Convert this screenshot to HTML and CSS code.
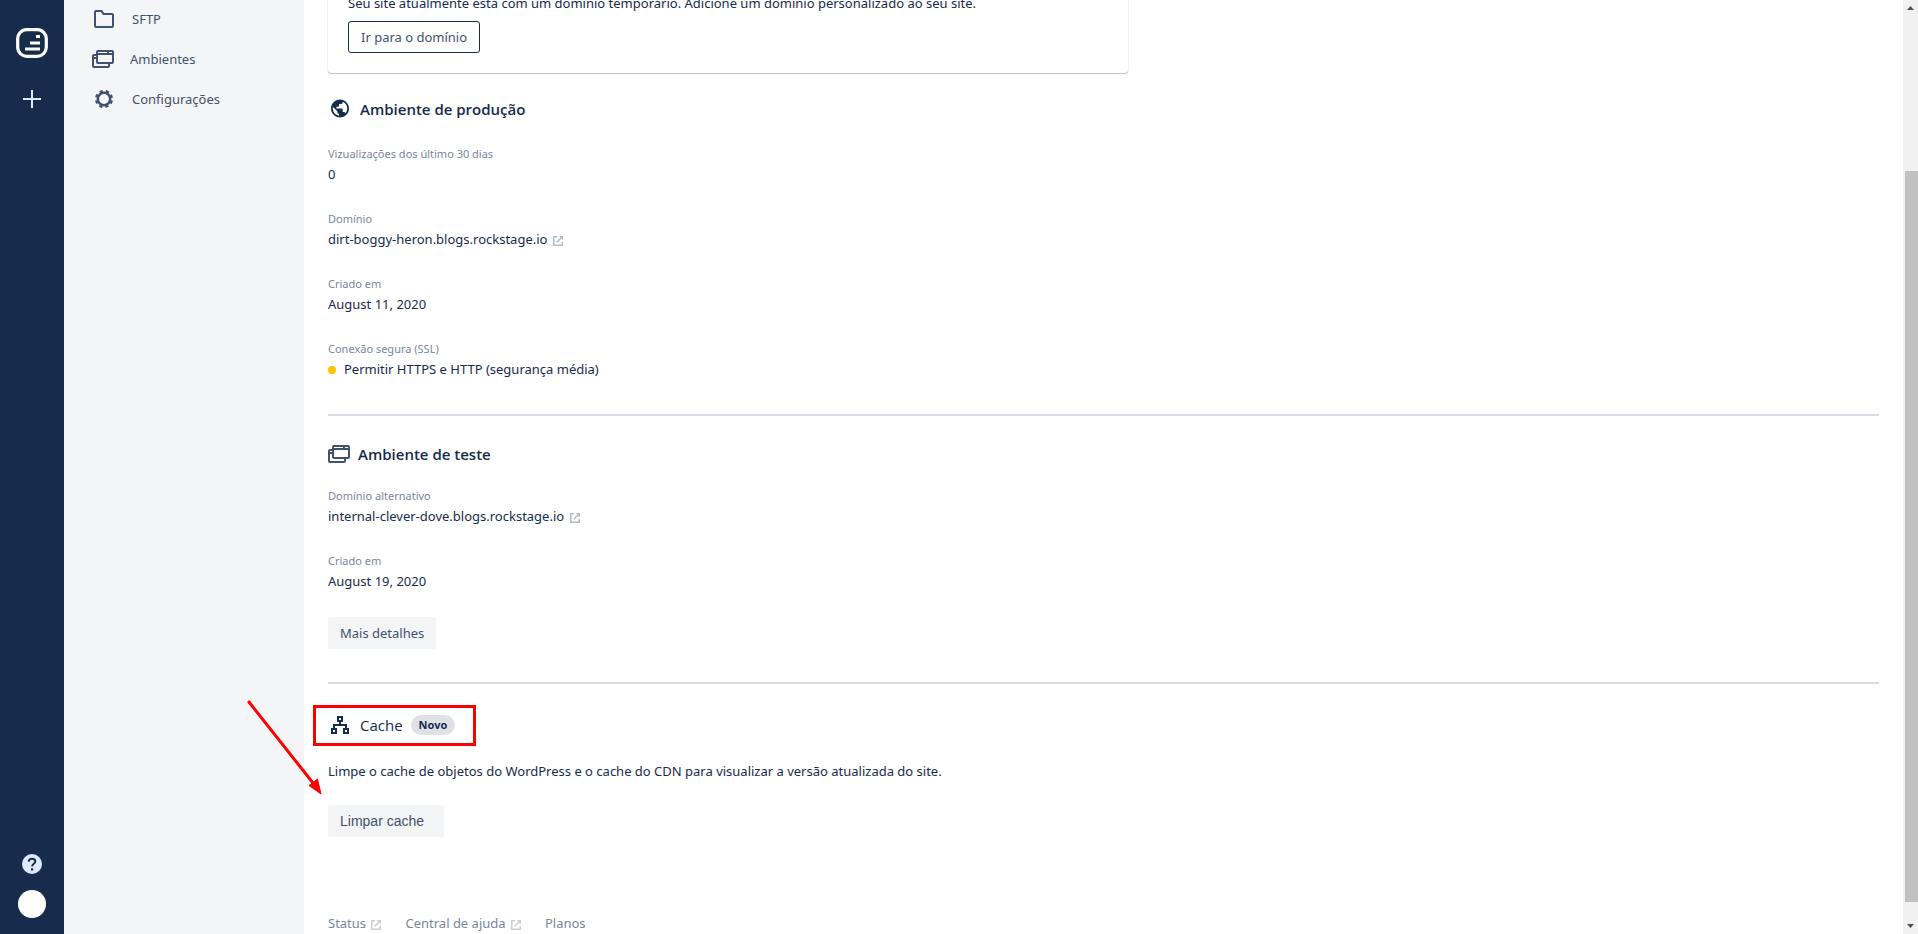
FILE: index.html
```html
<!DOCTYPE html>
<html lang="pt-BR">
<head>
    <meta charset="UTF-8">
    <meta name="viewport" content="width=device-width, initial-scale=1.0">
    <title>Ambientes</title>
    <link rel="stylesheet" href="styles.css">
</head>
<body>
    <svg width="0" height="0" class="symbols" aria-hidden="true">
        <symbol id="icon-windows" viewBox="0 0 22 18">
            <g fill="none" stroke="currentColor" stroke-width="2" stroke-linejoin="round">
                <rect x="5" y="1" width="16" height="12" rx="1"/>
                <path d="M5 4h16M5 5H2a1 1 0 0 0-1 1v10a1 1 0 0 0 1 1h14a1 1 0 0 0 1-1v-3M1 8h4"/>
            </g>
            <path fill="currentColor" d="M15 1h2v3h-2z"/>
        </symbol>
        <symbol id="icon-external" viewBox="0 0 10 10">
            <path fill="none" stroke="currentColor" stroke-width="1.5" d="M4 .8H.8v8.400h8.400V6M3.800 6.200 8.500 1.500"/>
            <path fill="currentColor" d="M5.800 0H10v4.200z"/>
        </symbol>
    </svg>

    <nav class="rail">
        <a href="#" class="logo" aria-label="Início">
            <svg width="32" height="30" viewBox="0 0 32 30">
                <rect x="1.700" y="1.700" width="28.600" height="26.600" rx="9" fill="none" stroke="#fff" stroke-width="3.200"/>
                <path fill="#fff" d="M20 7h4v3h-4zM14 13.500h10v3H14zM9 19.500h15v3H9z"/>
            </svg>
        </a>
        <button class="rail-button" aria-label="Adicionar">
            <svg width="18" height="18" viewBox="0 0 18 18"><path d="M9 0v18M0 9h18" stroke="#deebff" stroke-width="2"/></svg>
        </button>
        <button class="rail-button help" aria-label="Ajuda">
            <svg width="20" height="20" viewBox="0 0 20 20">
                <circle cx="10" cy="10" r="10" fill="#deebff"/>
                <path d="M6.700 7.700C6.700 5.700 8.100 4.700 10 4.700s3.300 1 3.300 2.800c0 2.300-3.200 2.300-3.200 5" fill="none" stroke="#172b4d" stroke-width="1.900"/>
                <path d="M9 14.300h2.200v2.200H9z" fill="#172b4d"/>
            </svg>
        </button>
        <button class="avatar" aria-label="Perfil"></button>
    </nav>

    <aside class="sidebar">
        <a href="#" class="menu-item">
            <svg width="24" height="24" viewBox="0 0 24 24"><path d="M3 19V5a1 1 0 0 1 1-1h5.500l2 3H20a1 1 0 0 1 1 1v11a1 1 0 0 1-1 1H4a1 1 0 0 1-1-1z" fill="none" stroke="currentColor" stroke-width="2"/></svg>
            SFTP
        </a>
        <a href="#" class="menu-item">
            <svg width="22" height="18"><use href="#icon-windows"/></svg>
            Ambientes
        </a>
        <a href="#" class="menu-item">
            <svg width="24" height="24" viewBox="0 0 24 24">
                <circle cx="12" cy="12" r="6.200" fill="none" stroke="currentColor" stroke-width="2.600"/>
                <circle cx="12" cy="12" r="7.900" fill="none" stroke="currentColor" stroke-width="2.400" stroke-dasharray="3.200 3.004" transform="rotate(11 12 12)"/>
            </svg>
            Configurações
        </a>
    </aside>

    <main class="content">
        <section class="notice">
            <p>Seu site atualmente está com um domínio temporário. Adicione um domínio personalizado ao seu site.</p>
            <button class="button outline">Ir para o domínio</button>
        </section>

        <section class="production">
            <h2>
                <svg width="24" height="24" viewBox="0 0 24 24"><path transform="translate(1.200 .7) scale(.9)" fill="currentColor" d="M12 2C6.480 2 2 6.480 2 12s4.480 10 10 10 10-4.480 10-10S17.520 2 12 2zm-1 17.930c-3.950-.49-7-3.850-7-7.930 0-.62.080-1.210.21-1.790L9 15v1c0 1.100.9 2 2 2v1.930zm6.900-2.540c-.26-.81-1-1.390-1.900-1.390h-1v-3c0-.55-.45-1-1-1H8v-2h2c.55 0 1-.45 1-1V7h2c1.100 0 2-.9 2-2v-.41c2.930 1.190 5 4.060 5 7.410 0 2.080-.8 3.970-2.100 5.390z"/></svg>
                Ambiente de produção
            </h2>
            <dl>
                <div>
                    <dt>Vizualizações dos último 30 dias</dt>
                    <dd>0</dd>
                </div>
                <div>
                    <dt>Domínio</dt>
                    <dd><a href="#">dirt-boggy-heron.blogs.rockstage.io <svg class="external" width="10" height="10"><use href="#icon-external"/></svg></a></dd>
                </div>
                <div>
                    <dt>Criado em</dt>
                    <dd>August 11, 2020</dd>
                </div>
                <div>
                    <dt>Conexão segura (SSL)</dt>
                    <dd><span class="dot"></span>Permitir HTTPS e HTTP (segurança média)</dd>
                </div>
            </dl>
        </section>
        <hr>

        <section class="staging">
            <h2>
                <svg class="soft" width="22" height="18"><use href="#icon-windows"/></svg>
                Ambiente de teste
            </h2>
            <dl>
                <div>
                    <dt>Domínio alternativo</dt>
                    <dd><a href="#">internal-clever-dove.blogs.rockstage.io <svg class="external" width="10" height="10"><use href="#icon-external"/></svg></a></dd>
                </div>
                <div>
                    <dt>Criado em</dt>
                    <dd>August 19, 2020</dd>
                </div>
            </dl>
            <button class="button">Mais detalhes</button>
        </section>
        <hr>

        <section class="cache">
            <h2>
                <svg width="24" height="24" viewBox="0 0 24 24">
                    <g fill="none" stroke="currentColor" stroke-width="2">
                        <path d="M10 4h4v4h-4zM4 16h4v4H4zM16 16h4v4h-4zM12 8v4M6 16v-4h12v4"/>
                    </g>
                </svg>
                Cache
                <span class="badge">Novo</span>
                <span class="highlight"></span>
            </h2>
            <p>Limpe o cache de objetos do WordPress e o cache do CDN para visualizar a versão atualizada do site.</p>
            <button class="button clear">Limpar cache</button>
            <svg class="arrow" width="80" height="100" viewBox="0 0 80 100">
                <path d="M5 5 69 86" stroke="#f00" stroke-width="3" stroke-linecap="round"/>
                <path d="M77 97 65 88.500 73.500 82z" fill="#f00" stroke="#f00"/>
            </svg>
        </section>

        <footer>
            <a href="#">Status <svg class="external" width="10" height="10"><use href="#icon-external"/></svg></a>
            <a href="#">Central de ajuda <svg class="external" width="10" height="10"><use href="#icon-external"/></svg></a>
            <a href="#">Planos</a>
        </footer>
    </main>

    <div class="scrollbar" aria-hidden="true">
        <svg width="7" height="4" viewBox="0 0 7 4"><path d="M0 4 3.500 0 7 4z" fill="#505050"/></svg>
        <div class="track"><div class="thumb"></div></div>
        <svg width="7" height="4" viewBox="0 0 7 4"><path d="M0 0 3.500 4 7 0z" fill="#505050"/></svg>
    </div>
</body>
</html>
```

FILE: styles.css
```css
* {
    box-sizing: border-box;
}
body {
    margin: 0;
    display: flex;
    height: 100vh;
    overflow: hidden;
    font-family: "Noto Sans", "Open Sans", sans-serif;
    font-size: 13px;
    line-height: 20px;
    color: #172b4d;
    background: #fff;
}
a {
    color: inherit;
    text-decoration: none;
}
button {
    font: inherit;
    color: inherit;
    cursor: pointer;
}
p, dl, dd, h2 {
    margin: 0;
}
svg {
    flex-shrink: 0;
}
.symbols {
    position: absolute;
}

/* left bar */
.rail {
    width: 64px;
    flex-shrink: 0;
    display: flex;
    flex-direction: column;
    align-items: center;
    padding: 28px 0 16px;
    background: #172b4d;
}
.logo {
    height: 30px;
    margin-bottom: 32px;
}
.rail-button {
    display: flex;
    padding: 0;
    border: none;
    background: none;
}
.help {
    margin-top: auto;
}
.avatar {
    width: 28px;
    height: 28px;
    margin-top: 16px;
    padding: 0;
    border: none;
    border-radius: 50%;
    background: #fff;
}

/* menu */
.sidebar {
    width: 240px;
    flex-shrink: 0;
    margin-top: -1px;
    background: #f4f5f7;
}
.menu-item {
    display: flex;
    align-items: center;
    gap: 16px;
    height: 40px;
    padding-left: 28px;
    color: #42526e;
}

/* content */
.content {
    flex: 1;
    min-width: 0;
    padding: 0 24px;
    margin-top: -7px;
}
.notice {
    max-width: 800px;
    padding: 0 20px 20px;
    border-radius: 3px;
    box-shadow: 0 1px 1px rgba(9, 30, 66, 0.25), 0 0 1px rgba(9, 30, 66, 0.31);
}
.notice p {
    margin-bottom: 8px;
}
.button {
    display: block;
    height: 32px;
    padding: 0 12px;
    border: none;
    border-radius: 3px;
    background: #f4f5f7;
    color: #42526e;
}
.outline {
    border: 1px solid #172b4d;
    background: #fff;
}
.clear {
    padding-right: 20px;
    font-family: "Liberation Sans", Arial, sans-serif;
    font-size: 14px;
}
h2 {
    display: flex;
    align-items: center;
    gap: 8px;
    font-family: "Open Sans", "Noto Sans", sans-serif;
    font-size: 15px;
    font-weight: 600;
    line-height: 24px;
}
dl {
    display: flex;
    flex-direction: column;
    gap: 24px;
}
dt {
    font-size: 11px;
    line-height: 17px;
    color: #7a869a;
}
dd {
    line-height: 24px;
}
hr {
    height: 2px;
    margin: 33px 0 26px;
    border: none;
    background: #dadde3;
}
.external {
    margin-left: 2px;
    vertical-align: -2px;
    color: #b3bac5;
}
.dot {
    display: inline-block;
    width: 8px;
    height: 8px;
    margin-right: 8px;
    border-radius: 50%;
    background: #ffc400;
}
.production {
    margin-top: 24px;
}
.production h2, .staging dl {
    margin-bottom: 24px;
}
.staging h2 {
    margin-bottom: 21px;
}
.soft {
    color: #42526e;
}
.cache {
    position: relative;
    margin-top: 29px;
}
.cache h2 {
    position: relative;
    width: fit-content;
    font-weight: 500;
    margin-bottom: 24px;
}
.cache p {
    margin-bottom: 24px;
}
.badge {
    padding: 0 8px;
    border-radius: 10px;
    background: #dfe1e6;
    font-size: 11px;
    font-weight: 700;
    line-height: 20px;
}
.highlight {
    position: absolute;
    inset: -8px -21px -9px -15px;
    border: 3px solid #f00;
}
.arrow {
    position: absolute;
    left: -84px;
    top: -16px;
}
footer {
    display: flex;
    gap: 24px;
    margin-top: 76px;
    color: #7a869a;
}
footer .external {
    color: #c9ced6;
}

/* scrollbar */
.scrollbar {
    width: 15px;
    flex-shrink: 0;
    display: flex;
    flex-direction: column;
    align-items: center;
    padding: 6px 0;
    background: #f1f1f1;
}
.track {
    flex: 1;
    align-self: stretch;
    display: flex;
    flex-direction: column;
    padding: 161px 0 22px 2px;
}
.thumb {
    flex: 1;
    background: #c1c1c1;
}
```
